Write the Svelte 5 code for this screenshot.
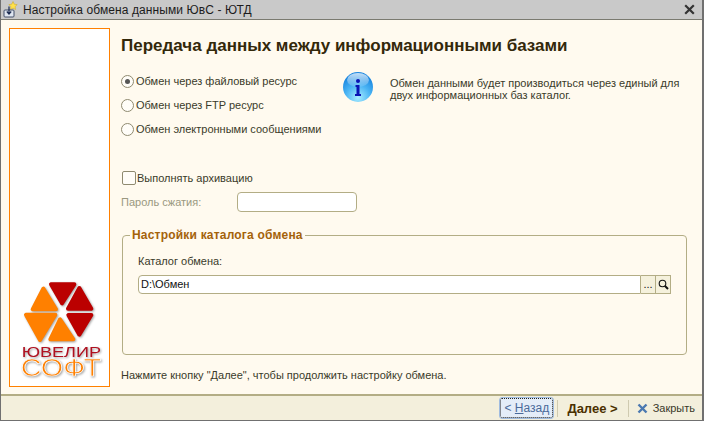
<script>
    const modes = [
        { label: 'Обмен через файловый ресурс', checked: true },
        { label: 'Обмен через FTP ресурс', checked: false },
        { label: 'Обмен электронными сообщениями', checked: false }
    ];
</script>

<div class="window">
    <div class="titlebar">
        <svg class="app-icon" width="18" height="18" viewBox="0 0 18 18">
            <path d="M11 0.5l1.3 2.7 2.9.4-2.1 2 .5 2.9-2.6-1.4-2.6 1.4.5-2.9-2.1-2 2.9-.4z" fill="#ffe14a" stroke="#c9a520" stroke-width=".5" />
            <rect x="2" y="9" width="10" height="7" rx="1" fill="#dfe6f0" stroke="#44506a" />
            <path d="M7 5.5v7M4.8 10.5L7 13l2.2-2.5" fill="none" stroke="#1a2a50" stroke-width="1.2" />
        </svg>
        <span class="title">Настройка обмена данными ЮвС - ЮТД</span>
        <svg class="close-x" width="11" height="11" viewBox="0 0 11 11">
            <path d="M1.2 1.2l8.6 8.6M9.8 1.2l-8.6 8.6" stroke="#333" stroke-width="2.2" />
        </svg>
    </div>

    <div class="content">
        <div class="brand">
            <svg class="logo" width="84" height="105" viewBox="60 30 252 315">
                <g class="orange">
                    <path d="M130 56L98 118H168z" />
                    <path d="M78 134H166L120 210z" />
                    <path d="M180 148L151 208H220z" />
                </g>
                <g class="red">
                    <path d="M153 43H223L186 100z" />
                    <path d="M238 54L274 116H204z" />
                    <path d="M205 135H274L238 194z" />
                </g>
                <text x="65" y="262" class="logo-top" textLength="238" lengthAdjust="spacingAndGlyphs">ЮВЕЛИР</text>
                <text x="62" y="318" class="logo-bottom" textLength="241" lengthAdjust="spacingAndGlyphs">СОФТ</text>
            </svg>
        </div>

        <div class="main">
            <h1>Передача данных между информационными базами</h1>

            <div class="options">
                <div class="modes">
                    {#each modes as mode}
                        <div class="mode">
                            <span class="radio" class:on={mode.checked}></span>
                            <span>{mode.label}</span>
                        </div>
                    {/each}
                </div>
                <svg class="info" width="32" height="32" viewBox="0 0 32 32">
                    <defs>
                        <radialGradient id="ball" cx="50%" cy="85%" r="75%">
                            <stop offset="0" stop-color="#a8ecff" />
                            <stop offset="0.55" stop-color="#4ab4f4" />
                            <stop offset="1" stop-color="#1a86e0" />
                        </radialGradient>
                        <linearGradient id="shine" x1="0" y1="0" x2="0" y2="1">
                            <stop offset="0" stop-color="#fff" stop-opacity=".75" />
                            <stop offset="1" stop-color="#fff" stop-opacity=".1" />
                        </linearGradient>
                    </defs>
                    <circle cx="16" cy="16" r="15" fill="url(#ball)" />
                    <ellipse cx="16" cy="9" rx="11" ry="7" fill="url(#shine)" />
                    <circle cx="16" cy="10" r="2" fill="#0a14b4" />
                    <path d="M13.5 14h4v9h1.5v2h-6v-2h1.5v-7h-1z" fill="#0a14b4" />
                </svg>
                <p class="info-text">Обмен данными будет производиться через единый для двух информационных баз каталог.</p>
            </div>

            <div class="archive">
                <span class="check"></span>
                <span>Выполнять архивацию</span>
            </div>
            <div class="password">
                <span class="muted">Пароль сжатия:</span>
                <span class="field small"></span>
            </div>

            <div class="group">
                <div class="legend">
                    <span>Настройки каталога обмена</span>
                </div>
                <div class="group-label">Каталог обмена:</div>
                <div class="path">
                    <span class="field path-input">D:\Обмен</span>
                    <span class="pick">...</span>
                    <span class="pick">
                        <svg width="11" height="11" viewBox="0 0 11 11">
                            <circle cx="4.5" cy="4.5" r="3.3" fill="none" stroke="#111" stroke-width="1.1" />
                            <path d="M7 7l3 3" stroke="#111" stroke-width="2" />
                        </svg>
                    </span>
                </div>
            </div>

            <div class="hint">Нажмите кнопку "Далее", чтобы продолжить настройку обмена.</div>
        </div>
    </div>

    <div class="footer">
        <button class="back"><span>&lt; <u>Н</u>азад</span></button>
        <span class="sep first"></span>
        <button class="next">Далее &gt;</button>
        <span class="sep second"></span>
        <button class="close">
            <svg width="11" height="11" viewBox="0 0 11 11">
                <path d="M1.5 1.5l8 8M9.5 1.5l-8 8" stroke="#4a78b0" stroke-width="2.4" />
            </svg>
            <span>Закрыть</span>
        </button>
    </div>
</div>

<style>
    :global(body) {
        margin: 0;
    }

    .window {
        width: 704px;
        height: 421px;
        box-sizing: border-box;
        display: flex;
        flex-direction: column;
        background: #fffaef;
        border-left: 1px solid #707070;
        border-right: 2px solid #707070;
        border-bottom: 1px solid #707070;
        font-family: "Liberation Sans", Arial, sans-serif;
        font-size: 11px;
        color: #3a3a2a;
    }

    .titlebar {
        height: 19px;
        flex: none;
        display: flex;
        align-items: center;
        background: #c9c9c9;
        border-bottom: 1px solid #7a7a70;
        padding: 0 7px 0 1px;
        font-size: 12px;
        color: #1c1c1c;
    }
    .app-icon {
        margin-right: 3px;
    }
    .title {
        flex: 1;
        letter-spacing: 0.1px;
    }

    .content {
        flex: 1;
        display: flex;
        min-height: 0;
        padding: 8px 15px 7px 8px;
    }

    .brand {
        width: 101px;
        flex: none;
        height: 359px;
        box-sizing: border-box;
        border: 1px solid #ff8000;
        background: #fff;
        display: flex;
        align-items: flex-end;
        justify-content: center;
        padding: 0 0 1px 5px;
    }
    .logo {
        filter: drop-shadow(1px 1px 1px #a0a0a0);
    }
    .orange {
        fill: #ff8000;
        stroke: #ff8000;
        stroke-width: 12;
        stroke-linejoin: round;
    }
    .red {
        fill: #bb0000;
        stroke: #bb0000;
        stroke-width: 12;
        stroke-linejoin: round;
    }
    .logo-top {
        font-size: 45px;
        fill: #b01020;
    }
    .logo-bottom {
        font-size: 69px;
        fill: #ff8000;
        stroke: #fff;
        stroke-width: 2;
    }

    .main {
        flex: 1;
        padding-left: 11px;
        min-width: 0;
    }

    h1 {
        margin: 8px 0 0;
        font-size: 17px;
        line-height: 19px;
        font-weight: bold;
        color: #33280a;
    }

    .options {
        display: flex;
        margin-top: 14px;
    }
    .modes {
        width: 221px;
        flex: none;
    }
    .mode {
        height: 24px;
        display: flex;
        align-items: center;
        gap: 2px;
    }
    .radio {
        width: 13px;
        height: 13px;
        box-sizing: border-box;
        border: 1px solid #8f8a70;
        border-radius: 50%;
        background: #fffdf8;
        display: flex;
        align-items: center;
        justify-content: center;
    }
    .radio.on::after {
        content: '';
        width: 5px;
        height: 5px;
        border-radius: 50%;
        background: #555;
    }
    .info {
        flex: none;
        margin-top: 2px;
    }
    .info-text {
        flex: 1;
        margin: 8px 0 0 16px;
        line-height: 12px;
    }

    .archive {
        display: flex;
        align-items: center;
        gap: 2px;
        margin: 30px 0 0 1px;
        height: 14px;
    }
    .check {
        width: 12px;
        height: 12px;
        border: 1px solid #8f8a70;
        border-radius: 2px;
        box-sizing: content-box;
        margin-right: -1px;
        background: #fffdf8;
    }

    .password {
        display: flex;
        align-items: center;
        margin-top: 7px;
    }
    .muted {
        width: 116px;
        color: #9a9880;
    }
    .field {
        box-sizing: border-box;
        border: 1px solid #b3ad85;
        border-radius: 4px;
        background: #fff;
    }
    .field.small {
        width: 120px;
        height: 20px;
    }

    .group {
        position: relative;
        box-sizing: border-box;
        height: 120px;
        margin: 23px 0 0 1px;
        padding: 19px 15px 0 15px;
        border: 1px solid #b3ad85;
        border-radius: 4px;
    }
    .legend {
        position: absolute;
        top: -8px;
        left: 7px;
        padding: 0 2px;
        background: #fffaef;
        font-size: 12px;
        line-height: 14px;
        font-weight: bold;
        letter-spacing: 0.2px;
        color: #a4620a;
    }
    .group-label {
        line-height: 13px;
    }
    .path {
        display: flex;
        height: 19px;
        margin-top: 7px;
    }
    .path-input {
        width: 503px;
        flex: none;
        border-radius: 4px 0 0 4px;
        padding-left: 2px;
        line-height: 17px;
        color: #111;
    }
    .pick {
        width: 15px;
        flex: none;
        box-sizing: border-box;
        border: 1px solid #b3ad85;
        border-left: none;
        background: #f5f1dc;
        display: flex;
        align-items: center;
        justify-content: center;
        color: #111;
        line-height: 17px;
    }

    .hint {
        margin-top: 14px;
        line-height: 13px;
    }

    .footer {
        height: 26px;
        flex: none;
        box-sizing: border-box;
        display: flex;
        align-items: center;
        justify-content: flex-end;
        padding-right: 7px;
        background: #f3efdc;
        border-top: 2px solid #b3ad85;
    }
    .footer button {
        border: none;
        background: none;
        padding: 0;
        font: inherit;
        color: #3a3a2a;
        display: flex;
        align-items: center;
        gap: 5px;
    }
    .footer button.back {
        width: 53px;
        height: 20px;
        justify-content: center;
        background: #e4edf8;
        border: 1px dotted #222;
        outline: 1px solid #a0bce0;
        border-radius: 2px;
        font-size: 12px;
        color: #4a6a9a;
    }
    .footer button.next {
        font-size: 13px;
        font-weight: bold;
        color: #4a3000;
    }
    .sep {
        width: 1px;
        height: 17px;
        background: #cfcab0;
    }
    .sep.first {
        margin: 0 9px 0 4px;
    }
    .sep.second {
        margin: 0 8px 0 10px;
    }
</style>
